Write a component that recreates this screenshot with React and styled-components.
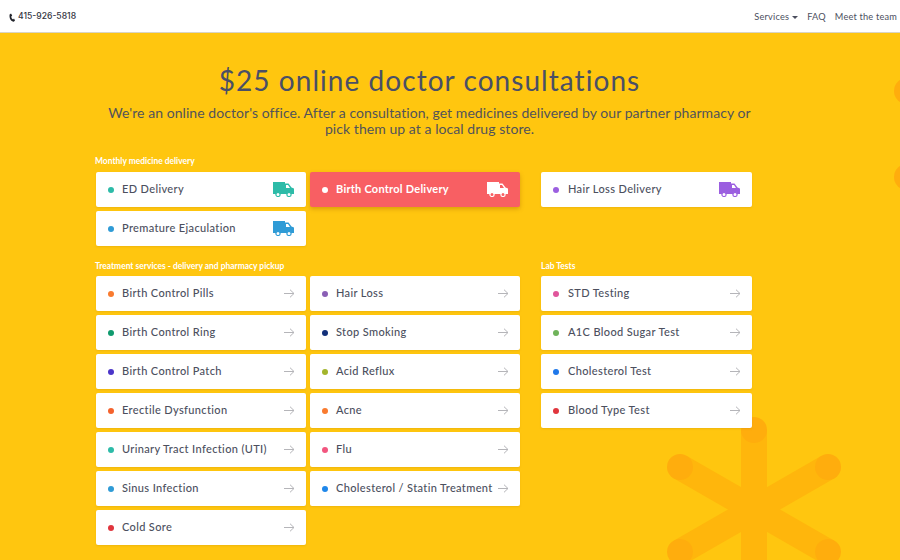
import React from 'react';
import styled, { createGlobalStyle } from 'styled-components';

const Global = createGlobalStyle`
  html, body { margin: 0; padding: 0; height: 100%; }
  body { background: #ffc60f; font-family: "Lato", "Open Sans", sans-serif; overflow: hidden; }
`;
const Page = styled.div`
  position: relative; width: 900px; height: 560px; overflow: hidden; background: #ffc60f; color: #4c4f5e;
`;
const Header = styled.header`
  height: 32px; background: #fff; border-bottom: 1px solid #d9d4c4; display: flex; align-items: center;
  justify-content: space-between; padding: 0 3px 0 9px; position: relative; z-index: 2;
`;
const Phone = styled.div`
  display: flex; align-items: center; gap: 3px; color: #33353f; font-family: "Inter", sans-serif; font-size: 8.6px; font-weight: 500;
  svg { margin-top: 3px; }
`;
const Nav = styled.nav`display: flex; gap: 9px; font-family: "Lato", sans-serif; font-size: 9.2px; color: #4c4f5e; letter-spacing: .2px;`;
const Caret = styled.span`
  display: inline-block; margin-left: 3px; vertical-align: middle; border: 3px solid transparent; border-top-color: #4c4f5e; border-bottom: 0;
`;
const Main = styled.main`position: relative; z-index: 1; padding: 31px 148px 0 95px;`;
const Title = styled.h1`
  margin: 0; text-align: center; font-size: 28px; line-height: 32px; font-weight: 400; letter-spacing: 1.05px; color: #4a4f66; padding-left: 12px; width: 657px; box-sizing: border-box;
`;
const Lead = styled.p`
  margin: 9px 0 0 -20px; width: 697px; padding-left: 12px; box-sizing: border-box; text-align: center; font-size: 14px; line-height: 16px; color: #52535a; letter-spacing: .06px; white-space: nowrap;
`;
const Section = styled.section`
  display: grid; grid-template-columns: 211px 211px 212px; column-gap: 3px; margin-top: ${p => p.$top}px;
  & > :nth-child(3) { margin-left: 18px; }
  & > :nth-child(3) a { margin-left: 0; width: 211px; }
  & > :nth-child(3) a > span:first-child { margin-right: 9px; }
`;
const Column = styled.div`display: flex; flex-direction: column; gap: 4px;`;
const Label = styled.h2`
  margin: 0 0 ${p => p.$after}px; font-size: 8.45px; line-height: 10px; font-weight: 700; color: #fff; height: 10px; white-space: nowrap;
`;
const Card = styled.a`
  margin-left: 1px; width: 210px; height: 35px; box-sizing: border-box; display: flex; align-items: center; padding: 0 11px 0 12px; border-radius: 2px;
  background: ${p => (p.$active ? '#f85f63' : '#fff')}; color: ${p => (p.$active ? '#fff' : '#4c4f5e')};
  box-shadow: ${p => (p.$active ? '0 2px 4px rgba(150,90,0,.35)' : '0 1px 2px rgba(170,120,0,.2)')};
  font-size: 11px; letter-spacing: ${p => (p.$active ? '.24px' : '.36px')}; font-weight: ${p => (p.$active ? 700 : 500)};
`;
const Dot = styled.span`width: 6px; height: 6px; border-radius: 50%; background: ${p => p.$c}; margin-right: 8px; flex: none;`;
const Name = styled.span`flex: 1; white-space: nowrap; padding-bottom: 2px;`;
const Decor = styled.svg`position: absolute; left: 0; top: 0; z-index: 0; pointer-events: none;`;
const TruckIcon = styled.svg`margin-right: 1px; flex: none;`;

const Truck = ({ c, win = '#fff' }) => (
  <TruckIcon width="21" height="15" viewBox="0 0 21 15">
    <path d="M0 0h12v1.5h3.5l3 4 2.5 1V12H0z" fill={c} />
    <path d="M13 3h2l2 3h-4z" fill={win} />
    <circle cx="5" cy="12.4" r="2.1" fill={win} stroke={c} strokeWidth="1.2" />
    <circle cx="16" cy="12.4" r="2.1" fill={win} stroke={c} strokeWidth="1.2" />
  </TruckIcon>
);
const Arrow = () => (
  <svg width="11" height="9" viewBox="0 0 11 9" fill="none" stroke="#b5b5b9" strokeWidth="1">
    <path d="M0 4.5h10M6 .7l4 3.8-4 3.8" />
  </svg>
);
const Item = ({ c, children }) => (
  <Card><Dot $c={c} /><Name>{children}</Name><Arrow /></Card>
);

export default function App() {
  return (
    <Page>
      <Global />
      <Decor width="900" height="560" viewBox="0 0 900 560">
        <g stroke="#ffb60c" strokeWidth="26" strokeLinecap="butt">
          <path d="M754 430V560M680 467L828 552M680 552L828 467" />
        </g>
        <g fill="#ffad0d">
          <circle cx="754" cy="430" r="13" />
          <circle cx="680" cy="467" r="13" />
          <circle cx="828" cy="467" r="13" />
          <circle cx="680" cy="552" r="13" />
          <circle cx="828" cy="552" r="13" />
          <circle cx="907" cy="91" r="13" />
          <circle cx="907" cy="177" r="13" />
        </g>
      </Decor>
      <Header>
        <Phone>
          <svg width="6" height="9" viewBox="0 0 6 9"><path d="M2 0.5L3.2 2.4 2.3 3.4c0 1.4.8 2.6 1.8 3L5 5.6 6 7.4 4.8 8.8C2 8.8 0 5.4.6 1.6z" fill="#22242b" /></svg>
          415-926-5818
        </Phone>
        <Nav>
          <span>Services<Caret /></span>
          <span>FAQ</span>
          <span>Meet the team</span>
        </Nav>
      </Header>
      <Main>
        <Title>$25 online doctor consultations</Title>
        <Lead>We're an online doctor's office. After a consultation, get medicines delivered by our partner pharmacy or<br />pick them up at a local drug store.</Lead>
        <Section $top={19}>
          <Column>
            <Label $after={2}>Monthly medicine delivery</Label>
            <Card><Dot $c="#2dbba8" /><Name>ED Delivery</Name><Truck c="#2dbba8" /></Card>
            <Card><Dot $c="#2f9bd6" /><Name>Premature Ejaculation</Name><Truck c="#2f9bd6" /></Card>
          </Column>
          <Column>
            <Label $after={2}>&nbsp;</Label>
            <Card $active><Dot $c="#fff" /><Name>Birth Control Delivery</Name><Truck c="#fff" win="#f85f63" /></Card>
          </Column>
          <Column>
            <Label $after={2}>&nbsp;</Label>
            <Card><Dot $c="#9b5fe0" /><Name>Hair Loss Delivery</Name><Truck c="#9b5fe0" /></Card>
          </Column>
        </Section>
        <Section $top={15}>
          <Column>
            <Label $after={1}>Treatment services - delivery and pharmacy pickup</Label>
            <Item c="#f97b2f">Birth Control Pills</Item>
            <Item c="#0f9a6e">Birth Control Ring</Item>
            <Item c="#4b35c9">Birth Control Patch</Item>
            <Item c="#f4622d">Erectile Dysfunction</Item>
            <Item c="#2dbba8">Urinary Tract Infection (UTI)</Item>
            <Item c="#2f9bd6">Sinus Infection</Item>
            <Item c="#e0353d">Cold Sore</Item>
          </Column>
          <Column>
            <Label $after={1}>&nbsp;</Label>
            <Item c="#8a5fb5">Hair Loss</Item>
            <Item c="#12307a">Stop Smoking</Item>
            <Item c="#a3b52c">Acid Reflux</Item>
            <Item c="#f97b2f">Acne</Item>
            <Item c="#f2567f">Flu</Item>
            <Item c="#1f87ea">Cholesterol / Statin Treatment</Item>
          </Column>
          <Column>
            <Label $after={1}>Lab Tests</Label>
            <Item c="#e0559b">STD Testing</Item>
            <Item c="#6fb35a">A1C Blood Sugar Test</Item>
            <Item c="#1f78ea">Cholesterol Test</Item>
            <Item c="#e0353d">Blood Type Test</Item>
          </Column>
        </Section>
      </Main>
    </Page>
  );
}
